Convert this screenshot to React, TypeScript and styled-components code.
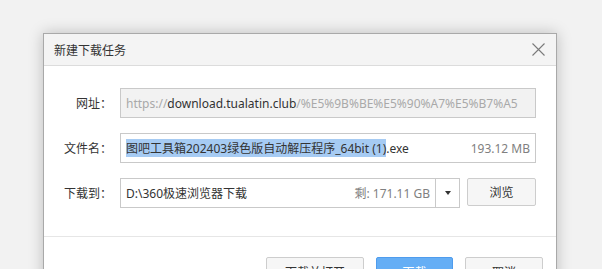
import React from "react";
import styled, { createGlobalStyle } from "styled-components";

const GlobalStyle = createGlobalStyle`
  html, body {
    margin: 0;
    padding: 0;
    background: #f2f2f2;
    overflow: hidden;
  }
  body {
    font-family: "Noto Sans", "Noto Sans CJK SC", sans-serif;
    font-size: 12px;
    color: #333;
  }
`;

const Page = styled.div`
  padding: 33px 0 0 43px;
  height: 269px;
  box-sizing: border-box;
  overflow: hidden;
`;

const Dialog = styled.div`
  width: 514px;
  height: 260px;
  box-sizing: border-box;
  background: #fff;
  border: 1px solid #a9a9a9;
  box-shadow: 0 0 14px rgba(0, 0, 0, 0.22);
`;

const TitleBar = styled.div`
  height: 31px;
  display: flex;
  align-items: center;
  justify-content: space-between;
  padding: 0 11px 0 10px;
  background: #f4f4f4;
  border-bottom: 1px solid #dcdcdc;
  font-size: 12px;
  color: #333;
`;

const CloseButton = styled.button`
  border: none;
  background: transparent;
  padding: 0;
  width: 14px;
  height: 14px;
  display: flex;
  align-items: center;
  justify-content: center;
`;

const Form = styled.div`
  display: grid;
  grid-template-columns: 68px 1fr;
  column-gap: 8px;
  row-gap: 15px;
  padding: 22px 20px 28px 0;
  border-bottom: 1px solid #e6e6e6;
`;

const Label = styled.div`
  display: flex;
  align-items: center;
  justify-content: flex-end;
  color: #333;
`;

const Field = styled.div<{ $readonly?: boolean }>`
  height: 30px;
  box-sizing: border-box;
  display: flex;
  align-items: center;
  padding: 0 5px;
  border: 1px solid #c9c9c9;
  background: ${(p) => (p.$readonly ? "#f2f2f2" : "#fff")};
  overflow: hidden;
  white-space: nowrap;
`;

const Grey = styled.span`
  color: #a9a9a9;
`;

const Selected = styled.span`
  background: #a6cbf3;
  color: #333;
`;

const Size = styled.span`
  margin-left: auto;
  color: #808080;
`;

const PathRow = styled.div`
  display: flex;
  gap: 7px;
`;

const Select = styled.div`
  flex: 1;
  height: 30px;
  box-sizing: border-box;
  display: flex;
  border: 1px solid #c9c9c9;
  background: #fff;
`;

const SelectValue = styled.div`
  flex: 1;
  display: flex;
  align-items: center;
  padding: 0 5px;
  white-space: nowrap;
`;

const Arrow = styled.div`
  width: 23px;
  border-left: 1px solid #c9c9c9;
  display: flex;
  align-items: center;
  justify-content: center;
  &::after {
    content: "";
    border-left: 3.5px solid transparent;
    border-right: 3.5px solid transparent;
    border-top: 4px solid #333;
  }
`;

const Button = styled.button<{ $primary?: boolean; $w: number; $h?: number }>`
  width: ${(p) => p.$w}px;
  height: ${(p) => p.$h ?? 30}px;
  box-sizing: border-box;
  font: inherit;
  font-size: 12px;
  color: ${(p) => (p.$primary ? "#fff" : "#333")};
  background: ${(p) => (p.$primary ? "#65aef5" : "#f6f6f6")};
  border: 1px solid ${(p) => (p.$primary ? "#4f9ced" : "#cdcdcd")};
  border-radius: 2px;
  padding: 0;
`;

const Footer = styled.div`
  display: flex;
  justify-content: flex-end;
  gap: 12px;
  padding: 20px 13px 0 0;
`;

export default function App() {
  return (
    <>
      <GlobalStyle />
      <Page>
        <Dialog>
          <TitleBar>
            <span>新建下载任务</span>
            <CloseButton>
              <svg width="13" height="13" viewBox="0 0 13 13">
                <path d="M0.5 0.5 L12.5 12.5 M12.5 0.5 L0.5 12.5" stroke="#7a7a7a" strokeWidth="1.1" />
              </svg>
            </CloseButton>
          </TitleBar>
          <Form>
            <Label>网址：</Label>
            <Field $readonly>
              <Grey>https://</Grey>
              <span>download.tualatin.club</span>
              <Grey>/%E5%9B%BE%E5%90%A7%E5%B7%A5</Grey>
            </Field>
            <Label>文件名：</Label>
            <Field>
              <Selected>图吧工具箱202403绿色版自动解压程序_64bit (1)</Selected>
              <span>.exe</span>
              <Size>193.12 MB</Size>
            </Field>
            <Label>下载到：</Label>
            <PathRow>
              <Select>
                <SelectValue>
                  <span>D:\360极速浏览器下载</span>
                  <Size>剩: 171.11 GB</Size>
                </SelectValue>
                <Arrow />
              </Select>
              <Button $w={69} $h={28}>浏览</Button>
            </PathRow>
          </Form>
          <Footer>
            <Button $w={98}>下载并打开</Button>
            <Button $w={77} $primary>下载</Button>
            <Button $w={78}>取消</Button>
          </Footer>
        </Dialog>
      </Page>
    </>
  );
}
